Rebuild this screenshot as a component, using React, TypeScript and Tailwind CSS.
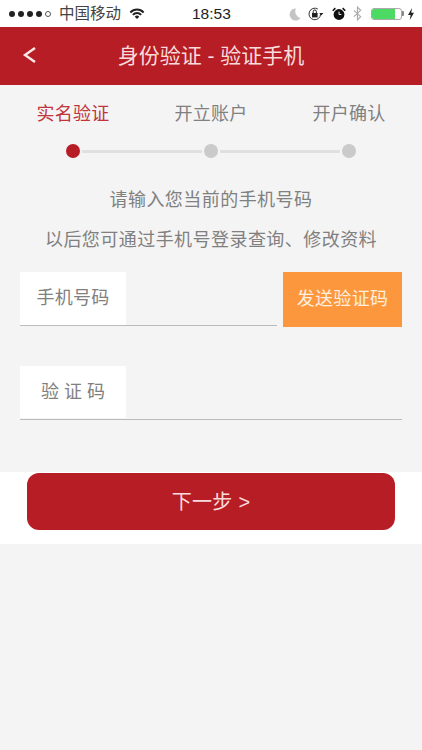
const font = { fontFamily: '"Liberation Sans", "Noto Sans CJK SC", sans-serif' };

const steps = ["实名验证", "开立账户", "开户确认"];

const StatusBar = () => (
  <div className="h-[27px] bg-white flex items-center justify-between pl-[9px] pr-[8px] text-[#222]">
    <div className="flex items-center w-[160px]">
      <div className="flex items-center gap-[3px]">
        <span className="w-[6px] h-[6px] rounded-full bg-[#222]" />
        <span className="w-[6px] h-[6px] rounded-full bg-[#222]" />
        <span className="w-[6px] h-[6px] rounded-full bg-[#222]" />
        <span className="w-[6px] h-[6px] rounded-full bg-[#222]" />
        <span className="w-[6px] h-[6px] rounded-full border border-[#555]" />
      </div>
      <span className="ml-[8px] text-[15.5px] leading-none text-[#444]">中国移动</span>
      <svg className="ml-[8px]" width="16" height="11" viewBox="0 0 17 12">
        <path d="M0.5 4 A11 11 0 0 1 16.5 4 L15 5.6 A9 9 0 0 0 2 5.6 Z" fill="#222" />
        <path d="M3.2 6.8 A7 7 0 0 1 13.8 6.8 L12.3 8.3 A5 5 0 0 0 4.7 8.3 Z" fill="#222" />
        <path d="M6 9.5 A3.4 3.4 0 0 1 11 9.5 L8.5 12 Z" fill="#222" />
      </svg>
    </div>
    <span className="absolute left-[192px] text-[15.5px] font-medium leading-none text-[#222]">18:53</span>
    <div className="flex items-center">
      <svg width="14" height="14" viewBox="0 0 14 14">
        <path d="M8 1.5 A6 6 0 1 0 12.5 11 A6.6 6.6 0 0 1 8 1.5 Z" fill="#c4c4c4" />
      </svg>
      <svg className="ml-[6px]" width="16" height="14" viewBox="0 0 16 14">
        <path d="M12.6 7 A5.8 5.8 0 1 1 9.8 2" fill="none" stroke="#333" strokeWidth="1" />
        <path d="M11.2 6 L15.4 6 L13.3 8.6 Z" fill="#222" />
        <rect x="4" y="6" width="5.6" height="4.4" fill="#222" />
        <path d="M5.2 6 V4.6 A1.6 1.6 0 0 1 8.4 4.6 V6" fill="none" stroke="#222" strokeWidth="1" />
      </svg>
      <svg className="ml-[8px]" width="14" height="14" viewBox="0 0 15 15">
        <circle cx="7.5" cy="8" r="5.8" fill="#111" />
        <path d="M7.5 5 V8 H10" fill="none" stroke="#fff" strokeWidth="1" />
        <path d="M0.8 4 L3.6 1.2 M14.2 4 L11.4 1.2" stroke="#111" strokeWidth="1.6" />
      </svg>
      <svg className="ml-[7px]" width="9" height="15" viewBox="0 0 10 16">
        <path d="M1 4.5 L8.5 11.5 L5 15 V1 L8.5 4.5 L1 11.5" fill="none" stroke="#aaa" strokeWidth="1.3" />
      </svg>
      <div className="ml-[9px] w-[31px] h-[12px] rounded-[3px] border border-[#aaa] bg-white">
        <div className="w-[23px] h-full rounded-l-[2px] bg-[#4cd964]" />
      </div>
      <span className="w-[2px] h-[5px] bg-[#888] rounded-r-[1px]" />
      <svg className="ml-[4px]" width="6" height="12" viewBox="0 0 6 12">
        <path d="M4 0 L0 7 H2.6 L1.8 12 L6 4.8 H3.3 Z" fill="#222" />
      </svg>
    </div>
  </div>
);

export default function App() {
  return (
    <div className="relative w-[422px] h-[750px] overflow-hidden bg-[#f4f4f4]" style={font}>
      <StatusBar />

      <div className="h-[58px] bg-[#b71d24] flex items-center justify-center relative">
        <svg className="absolute left-[22px] top-[19px]" width="15" height="18" viewBox="0 0 15 18">
          <path d="M13 2 L3 9 L13 16" fill="none" stroke="#fbe8e8" strokeWidth="2.4" />
        </svg>
        <span className="text-[21px] text-[#f8dcdc]">身份验证 - 验证手机</span>
      </div>

      <div className="px-[4px] pt-[18px] flex justify-between">
        {steps.map((s, i) => (
          <div key={s} className="w-[138px] text-center">
            <span className={`text-[18px] leading-[22px] tracking-[0.3px] ${i === 0 ? "text-[#c0353b]" : "text-[#808080]"}`}>
              {s}
            </span>
          </div>
        ))}
      </div>

      <div className="mt-[17px] pl-[66px] flex items-center h-[14px]">
        <span className="w-[14px] h-[14px] rounded-full bg-[#b71d24] shrink-0" />
        <span className="ml-[2px] w-[120px] h-[3px] bg-[#e0e0e0]" />
        <span className="ml-[2px] w-[14px] h-[14px] rounded-full bg-[#cacaca] shrink-0" />
        <span className="ml-[2px] w-[120px] h-[3px] bg-[#e0e0e0]" />
        <span className="ml-[2px] w-[14px] h-[14px] rounded-full bg-[#cacaca] shrink-0" />
      </div>

      <div className="mt-[22px] text-center text-[18px] leading-[40px] tracking-[0.45px] text-[#808080]">
        <p>请输入您当前的手机号码</p>
        <p>以后您可通过手机号登录查询、修改资料</p>
      </div>

      <div className="mt-[12px] px-[20px] flex justify-between items-start">
        <div className="w-[257px] h-[54px] border-b border-[#bbbbbb]">
          <div className="w-[106px] h-[53px] bg-white flex items-center justify-center text-[18px] tracking-[0.2px] text-[#808080]">
            手机号码
          </div>
        </div>
        <button className="w-[119px] h-[55px] bg-[#fd973d] text-[18px] tracking-[0.3px] text-[#fdeedd]">
          发送验证码
        </button>
      </div>

      <div className="mt-[39px] mx-[20px] h-[54px] border-b border-[#bbbbbb]">
        <div className="w-[106px] h-[52px] bg-white flex items-center justify-center text-[18px] text-[#808080]">
          验 证 码
        </div>
      </div>

      <div className="mt-[52px] h-[72px] bg-white px-[27px] pt-[1px]">
        <button className="w-[368px] h-[57px] rounded-[12px] bg-[#b71d24] text-[20px] tracking-[0.3px] text-[#f8dcdc]">
          下一步 &gt;
        </button>
      </div>
    </div>
  );
}
